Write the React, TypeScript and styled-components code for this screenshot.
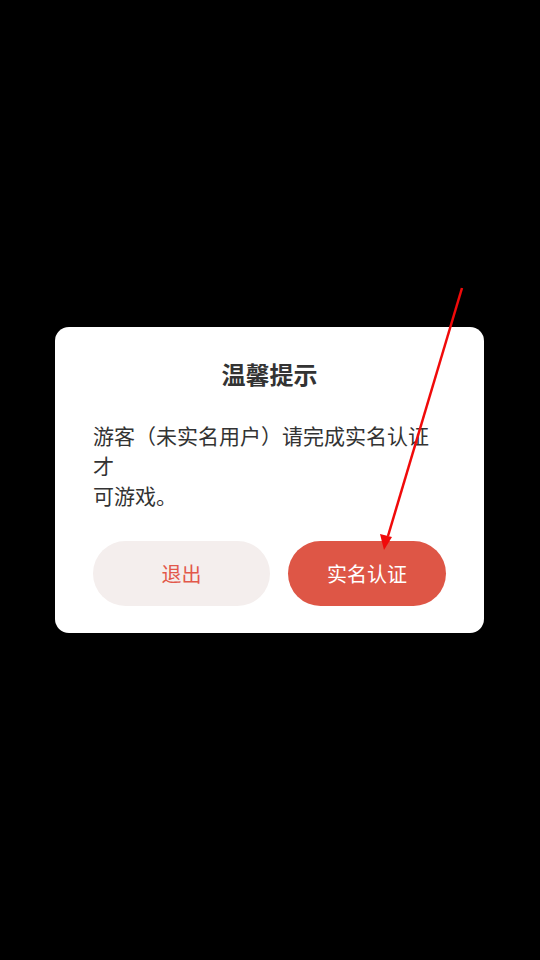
import React from 'react';
import styled, { createGlobalStyle } from 'styled-components';

const GlobalStyle = createGlobalStyle`
  html, body {
    margin: 0;
    padding: 0;
    background: #000;
  }
  body {
    font-family: 'Noto Sans CJK SC', 'Noto Sans', sans-serif;
  }
`;

const Screen = styled.div`
  position: relative;
  width: 540px;
  height: 960px;
  background: #000;
  display: flex;
  align-items: center;
  justify-content: center;
  overflow: hidden;
`;

const Dialog = styled.div`
  width: 429px;
  margin-right: 1px;
  box-sizing: border-box;
  padding: 30px 38px 27px;
  background: #fff;
  border-radius: 14px;
  display: flex;
  flex-direction: column;
`;

const Title = styled.h2`
  margin: 0;
  font-size: 24px;
  line-height: 34px;
  font-weight: 700;
  color: #333;
  text-align: center;
`;

const Body = styled.p`
  margin: 29px 0 0;
  font-size: 21px;
  line-height: 30px;
  color: #333;
  word-break: break-all;
`;

const Actions = styled.div`
  display: flex;
  gap: 18px;
  margin-top: 31px;
`;

const PillButton = styled.button<{ $primary?: boolean; $width: number }>`
  width: ${(p) => p.$width}px;
  height: 65px;
  border: none;
  border-radius: 33px;
  font-family: inherit;
  font-size: 20px;
  cursor: pointer;
  background: ${(p) => (p.$primary ? '#de5646' : '#f4eeed')};
  color: ${(p) => (p.$primary ? '#fff' : '#e2584a')};
`;

const Pointer = styled.svg`
  position: absolute;
  left: 0;
  top: 0;
  pointer-events: none;
`;

const App: React.FC = () => {
  return (
    <Screen>
      <GlobalStyle />
      <Dialog>
        <Title>温馨提示</Title>
        <Body>
          游客（未实名用户）请完成实名认证才
          <br />
          可游戏。
        </Body>
        <Actions>
          <PillButton $width={177}>退出</PillButton>
          <PillButton $primary $width={158}>
            实名认证
          </PillButton>
        </Actions>
      </Dialog>
      <Pointer width="540" height="960" viewBox="0 0 540 960">
        <line x1="462" y1="288" x2="388" y2="536" stroke="#f00a0a" strokeWidth="2.5" />
        <polygon points="384,550 380,534 392,537" fill="#f00a0a" />
      </Pointer>
    </Screen>
  );
};

export default App;
